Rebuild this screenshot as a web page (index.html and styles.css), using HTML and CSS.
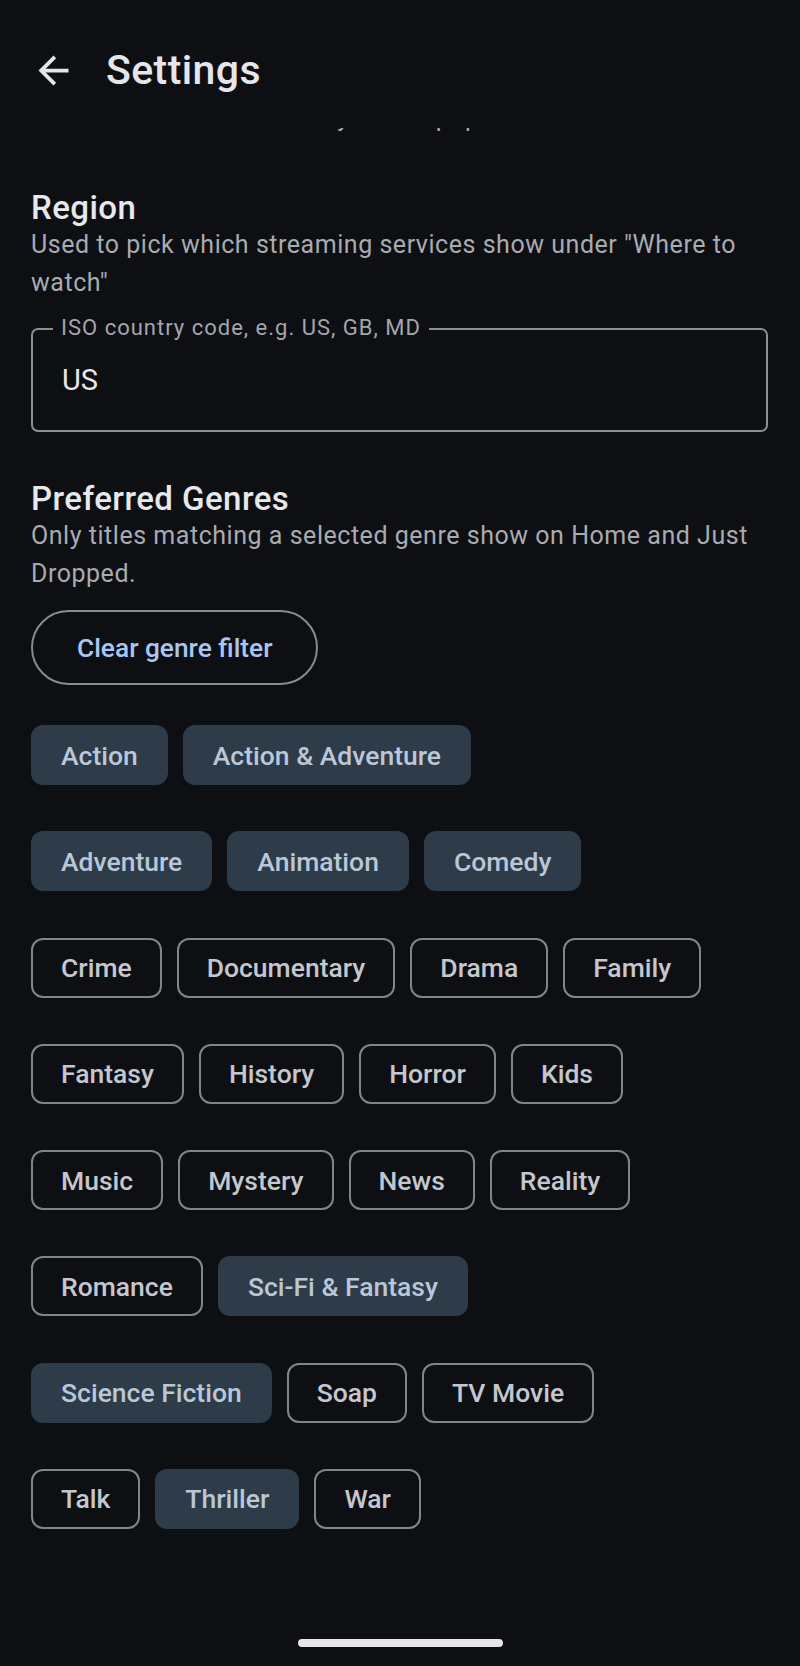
FILE: index.html
```html
<!DOCTYPE html>
<html lang="en">
  <head>
    <meta charset="UTF-8" />
    <meta name="viewport" content="width=device-width, initial-scale=1.0" />
    <title>Settings</title>
    <link rel="stylesheet" href="styles.css">
  </head>
  <body>
    <header class="top-bar">
      <button class="back-btn" aria-label="Back">
        <svg viewBox="0 0 24 24" width="45" height="45">
          <path d="M20 11H7.83l5.59-5.59L12 4l-8 8 8 8 1.41-1.41L7.83 13H20v-2z" fill="currentColor" />
        </svg>
      </button>
      <h1>Settings</h1>
    </header>

    <main class="content">
      <!-- previous setting, scrolled up under the top bar -->
      <div class="peek">
        <p class="desc">Hides titles that are already on the popular lists.</p>
      </div>

      <section class="section">
        <h2>Region</h2>
        <p class="desc">Used to pick which streaming services show under "Where to watch"</p>
        <div class="field">
          <label for="region" class="field-label">ISO country code, e.g. US, GB, MD</label>
          <input id="region" type="text" value="US" />
        </div>
      </section>

      <section class="section genres">
        <h2>Preferred Genres</h2>
        <p class="desc">Only titles matching a selected genre show on Home and Just Dropped.</p>
        <button class="clear-btn">Clear genre filter</button>

        <div class="chips">
          <div class="chip-row">
            <span class="chip selected">Action</span>
            <span class="chip selected">Action &amp; Adventure</span>
          </div>
          <div class="chip-row">
            <span class="chip selected">Adventure</span>
            <span class="chip selected">Animation</span>
            <span class="chip selected">Comedy</span>
          </div>
          <div class="chip-row">
            <span class="chip">Crime</span>
            <span class="chip">Documentary</span>
            <span class="chip">Drama</span>
            <span class="chip">Family</span>
          </div>
          <div class="chip-row">
            <span class="chip">Fantasy</span>
            <span class="chip">History</span>
            <span class="chip">Horror</span>
            <span class="chip">Kids</span>
          </div>
          <div class="chip-row">
            <span class="chip">Music</span>
            <span class="chip">Mystery</span>
            <span class="chip">News</span>
            <span class="chip">Reality</span>
          </div>
          <div class="chip-row">
            <span class="chip">Romance</span>
            <span class="chip selected">Sci-Fi &amp; Fantasy</span>
          </div>
          <div class="chip-row">
            <span class="chip selected">Science Fiction</span>
            <span class="chip">Soap</span>
            <span class="chip">TV Movie</span>
          </div>
          <div class="chip-row">
            <span class="chip">Talk</span>
            <span class="chip selected">Thriller</span>
            <span class="chip">War</span>
          </div>
        </div>
      </section>
    </main>

    <div class="home-indicator"></div>
  </body>
</html>
```

FILE: styles.css
```css
body {
  margin: 0;
  padding: 0;
  font-family: Roboto, "Noto Sans", sans-serif;
  background: #0e0f13;
  color: #e4e6eb;
  min-height: 1666px;
}
.top-bar {
  display: flex;
  align-items: center;
  height: 128px;
  padding-top: 12px;
  box-sizing: border-box;
  background: #0e0f13;
}
.back-btn {
  width: 45px;
  height: 45px;
  margin-left: 31px;
  padding: 0;
  border: none;
  background: none;
  color: #e4e6eb;
  display: flex;
}
.top-bar h1 {
  margin: 0 0 0 30px;
  font-size: 41px;
  line-height: 48px;
  font-weight: 500;
  letter-spacing: 0.4px;
  color: #e4e6eb;
}
.content {
  padding: 0 32px 0 31px;
}
.peek {
  height: 4px;
  overflow: hidden;
}
.peek .desc {
  margin-top: -29px;
  white-space: nowrap;
}
.section h2 {
  margin: 0;
  font-size: 33px;
  line-height: 36px;
  font-weight: 500;
  letter-spacing: 0.45px;
  color: #e6e8ec;
}
.section:first-of-type {
  margin-top: 58px;
}
.desc {
  margin: 0;
  font-size: 25px;
  line-height: 37.5px;
  letter-spacing: 0.53px;
  color: #a8abb1;
}
.field {
  position: relative;
  margin-top: 27px;
}
.field-label {
  position: absolute;
  top: -13px;
  left: 22px;
  padding: 0 8px;
  background: #0e0f13;
  font-size: 22px;
  line-height: 25px;
  letter-spacing: 1px;
  color: #a3a6ac;
}
.field input {
  display: block;
  width: 100%;
  height: 104px;
  box-sizing: border-box;
  padding: 0 29px;
  border: 2px solid #8a8e95;
  border-radius: 7px;
  background: transparent;
  font-family: Roboto, "Noto Sans", sans-serif;
  font-size: 29px;
  color: #e6e8ec;
  outline: none;
}
.genres {
  margin-top: 49px;
}
.clear-btn {
  display: block;
  margin-top: 18px;
  height: 75px;
  padding: 0 44px;
  border: 2px solid #878b92;
  border-radius: 38px;
  background: transparent;
  font-family: Roboto, "Noto Sans", sans-serif;
  font-size: 26.3px;
  font-weight: 500;
  color: #a9c6f3;
}
.chips {
  display: flex;
  flex-direction: column;
  gap: 46.25px;
  margin-top: 40px;
}
.chip-row {
  display: flex;
  gap: 15px;
}
.chip {
  display: flex;
  align-items: center;
  height: 60px;
  box-sizing: border-box;
  padding: 0 28px;
  border: 2px solid #80858c;
  border-radius: 12px;
  font-size: 26.5px;
  font-weight: 500;
  color: #c4c7cd;
  white-space: nowrap;
}
.chip.selected {
  padding: 0 30px;
  border: none;
  background: #2e3b48;
  color: #bac7d9;
}
.home-indicator {
  position: absolute;
  left: 298px;
  top: 1639px;
  width: 205px;
  height: 8px;
  border-radius: 4px;
  background: #e6e6e6;
}
```
